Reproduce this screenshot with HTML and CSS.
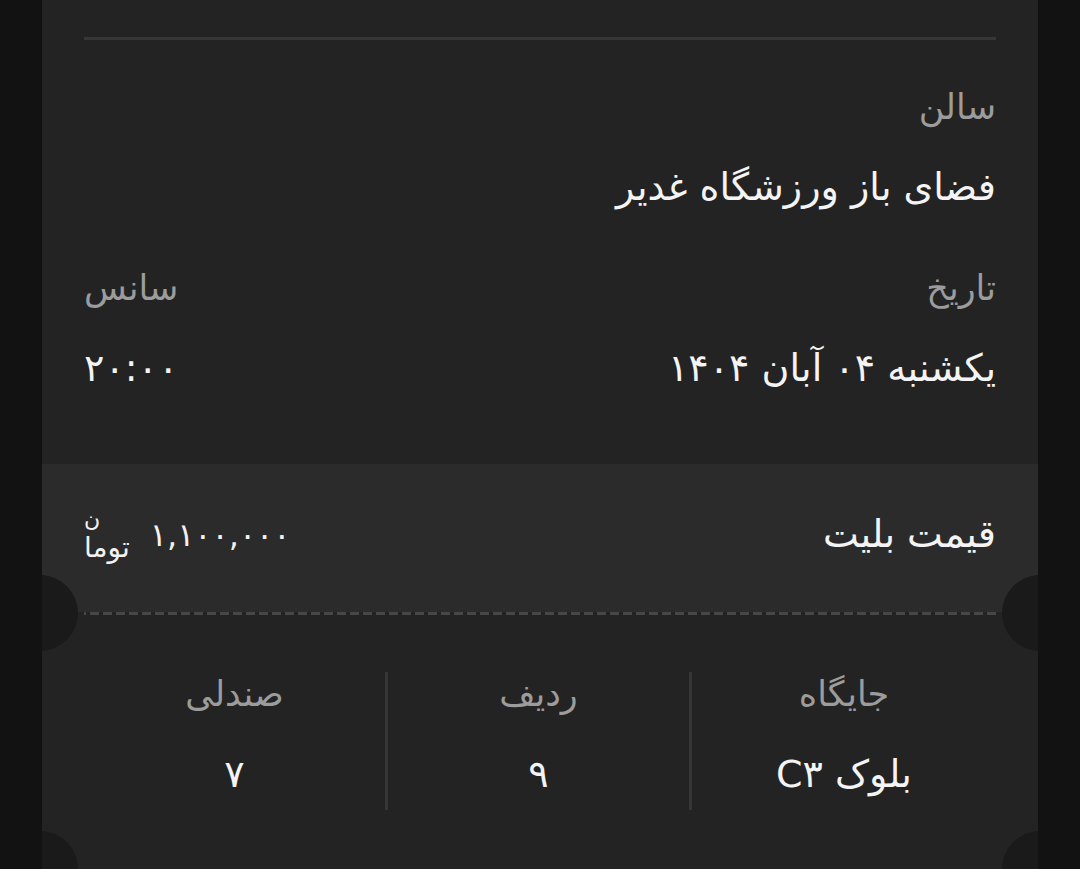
FILE: index.html
```html
<!DOCTYPE html>
<html lang="fa" dir="rtl">
<head>
  <meta charset="UTF-8">
  <meta name="viewport" content="width=device-width, initial-scale=1.0">
  <title>بلیت</title>
  <link rel="stylesheet" href="styles.css">
</head>
<body>
  <div class="ticket">
    <div class="ticket-head"></div>

    <div class="details">
      <div class="field">
        <div class="label">سالن</div>
        <div class="value">فضای باز ورزشگاه غدیر</div>
      </div>
      <div class="row">
        <div class="field">
          <div class="label">تاریخ</div>
          <div class="value">یکشنبه ۰۴ آبان ۱۴۰۴</div>
        </div>
        <div class="field">
          <div class="label">سانس</div>
          <div class="value">۲۰:۰۰</div>
        </div>
      </div>
    </div>

    <div class="price">
      <div class="price-title">قیمت بلیت</div>
      <div class="price-amount">
        <span class="price-number">۱,۱۰۰,۰۰۰</span>
        <span class="unit"><span class="unit-head">توما</span><span class="unit-tail">ن</span></span>
      </div>
    </div>

    <div class="perforation"></div>

    <div class="seats">
      <div class="seat-col">
        <div class="label">جایگاه</div>
        <div class="value">بلوک C۳</div>
      </div>
      <div class="seat-col">
        <div class="label">ردیف</div>
        <div class="value">۹</div>
      </div>
      <div class="seat-col">
        <div class="label">صندلی</div>
        <div class="value">۷</div>
      </div>
    </div>

    <div class="perforation perforation-plain"></div>
    <div class="ticket-foot"></div>
  </div>
</body>
</html>
```

FILE: styles.css
```css
html, body {
  margin: 0;
  padding: 0;
  height: 100%;
  overflow: hidden;
}
body {
  background-color: #121212;
  font-family: "DejaVu Sans", "Noto Sans", sans-serif;
  color: #f2f2f2;
}
.ticket {
  margin: 0 42px;
  background-color: #232323;
  position: relative;
  overflow: hidden;
  min-height: 100%;
}
.ticket-head {
  margin: 0 42px;
  height: 37px;
  border-bottom: 3px solid #363636;
}
.details {
  padding: 47px 42px 72px;
}
.field {
  display: flex;
  flex-direction: column;
  gap: 36px;
}
.row {
  display: flex;
  justify-content: space-between;
  margin-top: 57px;
}
.label {
  font-size: 35px;
  line-height: 40px;
  color: #9c9c9c;
}
.value {
  font-size: 38px;
  line-height: 48px;
  color: #f4f4f4;
}

/* قیمت */
.price {
  background-color: #2b2b2b;
  height: 148px;
  padding: 0 42px;
  display: flex;
  align-items: center;
  justify-content: space-between;
}
.price-title {
  font-size: 38px;
  line-height: 48px;
  margin-top: -8px;
  color: #f4f4f4;
}
.price-amount {
  display: flex;
  align-items: center;
  gap: 20px;
  margin-top: -6px;
}
.price-number {
  font-size: 32px;
}
.unit {
  display: flex;
  flex-direction: column-reverse;
  align-items: flex-end;
}
.unit-tail {
  font-size: 22px;
  line-height: normal;
}
.unit-head {
  font-size: 28px;
  line-height: normal;
}

/* خط پرفراژ و نیم‌دایره‌ها */
.perforation {
  position: relative;
  margin: 0 42px;
  height: 3px;
  background: repeating-linear-gradient(to left, #474747 0 9px, transparent 9px 13px);
}
.perforation-plain {
  background: none;
}
.perforation::before,
.perforation::after {
  content: "";
  position: absolute;
  top: -37px;
  width: 76px;
  height: 76px;
  border-radius: 50%;
  background-color: #1a1a1a;
}
.perforation::before {
  right: -82px;
}
.perforation::after {
  left: -82px;
}

/* جایگاه */
.seats {
  display: grid;
  grid-template-columns: repeat(3, 1fr);
  padding: 57px 42px 58px;
}
.seat-col {
  display: flex;
  flex-direction: column;
  align-items: center;
  gap: 36px;
  padding: 2px 0 12px;
}
.seat-col + .seat-col {
  border-right: 3px solid #363636;
}
.ticket-foot {
  height: 120px;
}
```
